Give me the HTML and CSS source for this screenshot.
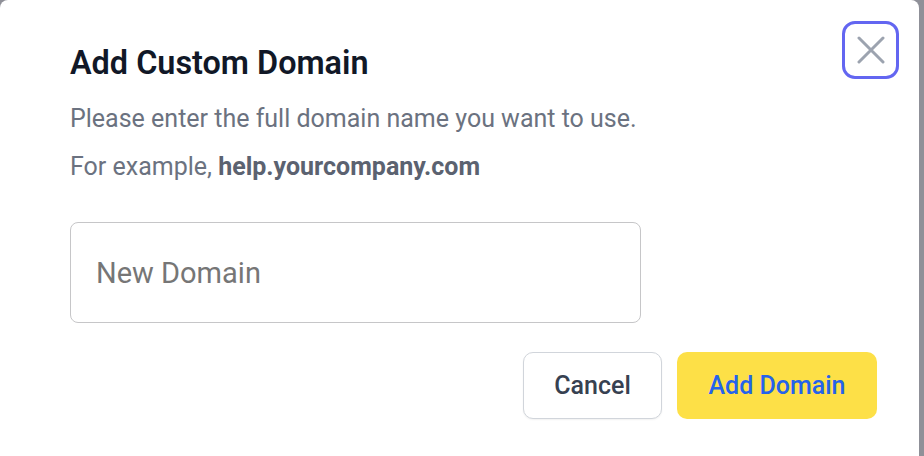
FILE: index.html
```html
<!DOCTYPE html>
<html lang="en">
<head>
<meta charset="utf-8">
<title>Add Custom Domain</title>
<link rel="stylesheet" href="styles.css">
</head>
<body>
<div class="modal">
  <button class="close-btn" aria-label="Close">
    <svg width="28" height="28" viewBox="0 0 28 28" fill="none" stroke="#9ca3af" stroke-width="3" stroke-linecap="round">
      <path d="M2 2L26 26M26 2L2 26"/>
    </svg>
  </button>
  <h2 class="title">Add Custom Domain</h2>
  <p class="desc">Please enter the full domain name you want to use.</p>
  <p class="desc example">For example, <strong>help.yourcompany.com</strong></p>
  <input class="domain-input" type="text" placeholder="New Domain">
  <div class="actions">
    <button class="btn btn-cancel">Cancel</button>
    <button class="btn btn-add">Add Domain</button>
  </div>
</div>
</body>
</html>
```
FILE: styles.css
```css
html, body {
  margin: 0;
  padding: 0;
  height: 100%;
  overflow: hidden;
  background: #8f9098;
}
body {
  font-family: Roboto, "Liberation Sans", sans-serif;
}
.modal {
  position: relative;
  width: 919px;
  height: 456px;
  box-sizing: border-box;
  background: #ffffff;
  border-radius: 8px 8px 0 0;
  padding: 45px 42px 0 70px;
}
.close-btn {
  position: absolute;
  top: 21px;
  right: 20px;
  width: 57px;
  height: 58px;
  box-sizing: border-box;
  border: 3px solid #6366f1;
  border-radius: 13px;
  background: #ffffff;
  display: flex;
  align-items: center;
  justify-content: center;
  padding: 0;
}
.title {
  margin: 0;
  font-size: 32.4px;
  line-height: 37px;
  font-weight: 600;
  color: #111827;
}
.desc {
  margin: 21px 0 0;
  font-size: 25px;
  line-height: 32px;
  color: #6b7280;
}
.example {
  margin-top: 16px;
}
.example strong {
  font-weight: 700;
  color: #5b6270;
}
.domain-input {
  display: block;
  margin-top: 39px;
  width: 571px;
  height: 101px;
  box-sizing: border-box;
  border: 1px solid #c6c6c8;
  border-radius: 8px;
  padding: 0 25px;
  font-family: Roboto, "Liberation Sans", sans-serif;
  font-size: 29px;
  color: #111827;
  outline: none;
}
.domain-input::placeholder {
  color: #767676;
}
.actions {
  display: flex;
  justify-content: flex-end;
  gap: 15px;
  margin-top: 29px;
}
.btn {
  height: 67px;
  border-radius: 10px;
  font-family: Roboto, "Liberation Sans", sans-serif;
  font-size: 25px;
  font-weight: 500;
  box-sizing: border-box;
  cursor: pointer;
}
.btn-cancel {
  width: 139px;
  background: #ffffff;
  border: 1px solid #d1d5db;
  color: #374151;
  box-shadow: 0 1px 2px rgba(0, 0, 0, 0.06);
}
.btn-add {
  width: 200px;
  background: #fde047;
  border: none;
  color: #2563eb;
}
```
